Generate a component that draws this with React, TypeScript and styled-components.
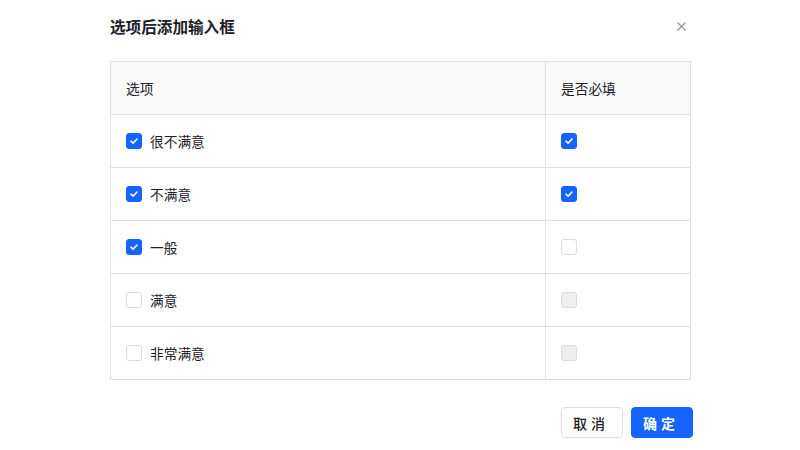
import React, { useState } from "react";
import styled, { createGlobalStyle } from "styled-components";

const GlobalStyle = createGlobalStyle`
  html, body {
    margin: 0;
    padding: 0;
    background: #ffffff;
    font-family: "Inter", "Noto Sans CJK SC", "Liberation Sans", sans-serif;
    color: #1d2129;
  }
`;

const Dialog = styled.div`
  width: 800px;
  height: 450px;
  box-sizing: border-box;
  padding: 14px 108px 0 110px;
  display: flex;
  flex-direction: column;
`;

const Header = styled.div`
  display: flex;
  align-items: center;
  justify-content: space-between;
  height: 24px;
  padding-right: 4px;
`;

const Title = styled.h2`
  margin: 0;
  font-size: 15.6px;
  font-weight: 600;
  color: #1d2129;
`;

const Close = styled.button`
  border: none;
  background: none;
  padding: 0;
  width: 14px;
  height: 14px;
  display: flex;
  align-items: center;
  justify-content: center;
  color: #86909c;
  cursor: pointer;
`;

const Table = styled.div`
  margin-top: 23px;
  width: 581px;
  box-sizing: border-box;
  border: 1px solid #e0e0e0;
  border-bottom: none;
  display: grid;
  grid-template-columns: 435px 1fr;
`;

const Cell = styled.div<{ $head?: boolean; $last?: boolean }>`
  height: 53px;
  box-sizing: border-box;
  border-bottom: 1px solid #e0e0e0;
  border-right: ${p => (p.$last ? "none" : "1px solid #e0e0e0")};
  background: ${p => (p.$head ? "#fafafa" : "#ffffff")};
  display: flex;
  align-items: center;
  gap: 8px;
  padding-left: 15px;
  font-size: 13.7px;
  color: #1d2129;
`;

const Box = styled.span<{ $checked?: boolean; $disabled?: boolean }>`
  width: 16px;
  height: 16px;
  box-sizing: border-box;
  border-radius: 3px;
  border: 1px solid ${p => (p.$checked ? "#1664ff" : "#dcdcdc")};
  background: ${p => (p.$checked ? "#1664ff" : p.$disabled ? "#eeeeee" : "#ffffff")};
  display: inline-flex;
  align-items: center;
  justify-content: center;
  flex-shrink: 0;
  cursor: ${p => (p.$disabled ? "not-allowed" : "pointer")};
`;

const Footer = styled.div`
  margin-top: 27px;
  display: flex;
  justify-content: flex-end;
  gap: 8px;
  margin-right: -1px;
`;

const Btn = styled.button<{ $primary?: boolean }>`
  width: 62px;
  height: 31px;
  box-sizing: border-box;
  border-radius: 4px;
  font-family: inherit;
  font-size: 14px;
  font-weight: ${p => (p.$primary ? 600 : 500)};
  letter-spacing: 4px;
  padding-left: 4px;
  border: 1px solid ${p => (p.$primary ? "#1664ff" : "#dcdfe5")};
  background: ${p => (p.$primary ? "#1664ff" : "#ffffff")};
  color: ${p => (p.$primary ? "#ffffff" : "#1d2129")};
  cursor: pointer;
`;

type Row = { label: string; checked: boolean; required: boolean };

const initialRows: Row[] = [
  { label: "很不满意", checked: true, required: true },
  { label: "不满意", checked: true, required: true },
  { label: "一般", checked: true, required: false },
  { label: "满意", checked: false, required: false },
  { label: "非常满意", checked: false, required: false },
];

const Check = () => (
  <svg width="10" height="10" viewBox="0 0 10 10" fill="none">
    <path d="M2 5.2L4.1 7.2L8 3" stroke="#fff" strokeWidth="1.6" strokeLinecap="round" strokeLinejoin="round" />
  </svg>
);

export default function App() {
  const [rows, setRows] = useState(initialRows);

  const toggle = (i: number, key: "checked" | "required") => {
    setRows(rs =>
      rs.map((r, j) => {
        if (j !== i) return r;
        if (key === "required" && !r.checked) return r;
        const next = { ...r, [key]: !r[key] };
        if (key === "checked" && !next.checked) next.required = false;
        return next;
      })
    );
  };

  return (
    <>
      <GlobalStyle />
      <Dialog>
        <Header>
          <Title>选项后添加输入框</Title>
          <Close aria-label="close">
            <svg width="9" height="9" viewBox="0 0 9 9">
              <path d="M0.5 0.5L8.5 8.5M8.5 0.5L0.5 8.5" stroke="#8a8f99" strokeWidth="1.1" />
            </svg>
          </Close>
        </Header>
        <Table>
          <Cell $head>选项</Cell>
          <Cell $head $last>是否必填</Cell>
          {rows.map((r, i) => (
            <React.Fragment key={r.label}>
              <Cell>
                <Box $checked={r.checked} onClick={() => toggle(i, "checked")}>
                  {r.checked && <Check />}
                </Box>
                {r.label}
              </Cell>
              <Cell $last>
                <Box
                  $checked={r.required}
                  $disabled={!r.checked}
                  onClick={() => toggle(i, "required")}
                >
                  {r.required && <Check />}
                </Box>
              </Cell>
            </React.Fragment>
          ))}
        </Table>
        <Footer>
          <Btn>取消</Btn>
          <Btn $primary>确定</Btn>
        </Footer>
      </Dialog>
    </>
  );
}
